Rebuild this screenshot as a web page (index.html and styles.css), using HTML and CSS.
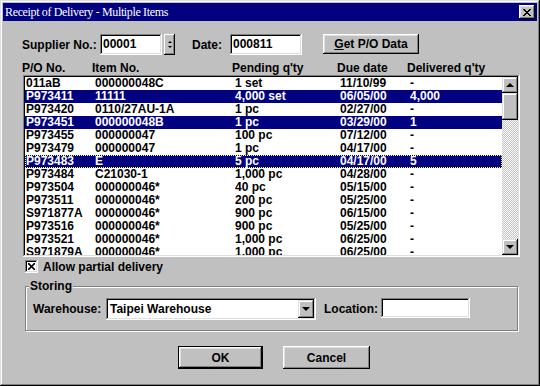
FILE: index.html
```html
<!DOCTYPE html>
<html lang="en">

<head>
  <meta charset="UTF-8" />
  <meta name="viewport" content="width=device-width, initial-scale=1.0" />
  <title>Receipt of Delivery - Multiple Items</title>
  <link rel="stylesheet" href="styles.css">
</head>

<body>
  <div class="window">
    <div class="titlebar">
      <span class="title">Receipt of Delivery - Multiple Items</span>
      <button class="close">
        <svg width="8" height="7" viewBox="0 0 8 7"><path d="M0 0 L7 7 M1 0 L8 7 M7 0 L0 7 M8 0 L1 7" stroke="#000" stroke-width="1" /></svg>
      </button>
    </div>

    <div class="content">
      <!-- supplier / date row -->
      <div class="top-row">
        <span class="lbl lbl-supplier">Supplier No.:</span>
        <div class="field field-supplier">00001</div>
        <div class="spin">
          <span class="spin-up"></span>
          <span class="spin-down"></span>
        </div>
        <span class="lbl lbl-date">Date:</span>
        <div class="field field-date">000811</div>
        <button class="btn btn-get"><u>G</u>et P/O Data</button>
      </div>

      <!-- list -->
      <div class="list-head">
        <span>P/O No.</span>
        <span>Item No.</span>
        <span>Pending q'ty</span>
        <span>Due date</span>
        <span>Delivered q'ty</span>
      </div>
      <div class="listbox">
        <div class="rows">
          <div class="row"><span>011aB</span><span>000000048C</span><span>1 set</span><span>11/10/99</span><span>-</span></div>
          <div class="row sel"><span>P973411</span><span>11111</span><span>4,000 set</span><span>06/05/00</span><span>4,000</span></div>
          <div class="row"><span>P973420</span><span>0110/27AU-1A</span><span>1 pc</span><span>02/27/00</span><span>-</span></div>
          <div class="row sel"><span>P973451</span><span>000000048B</span><span>1 pc</span><span>03/29/00</span><span>1</span></div>
          <div class="row"><span>P973455</span><span>000000047</span><span>100 pc</span><span>07/12/00</span><span>-</span></div>
          <div class="row"><span>P973479</span><span>000000047</span><span>1 pc</span><span>04/17/00</span><span>-</span></div>
          <div class="row sel focus"><span>P973483</span><span>E</span><span>5 pc</span><span>04/17/00</span><span>5</span></div>
          <div class="row"><span>P973484</span><span>C21030-1</span><span>1,000 pc</span><span>04/28/00</span><span>-</span></div>
          <div class="row"><span>P973504</span><span>000000046*</span><span>40 pc</span><span>05/15/00</span><span>-</span></div>
          <div class="row"><span>P973511</span><span>000000046*</span><span>200 pc</span><span>05/25/00</span><span>-</span></div>
          <div class="row"><span>S971877A</span><span>000000046*</span><span>900 pc</span><span>06/15/00</span><span>-</span></div>
          <div class="row"><span>P973516</span><span>000000046*</span><span>900 pc</span><span>05/25/00</span><span>-</span></div>
          <div class="row"><span>P973521</span><span>000000046*</span><span>1,000 pc</span><span>06/25/00</span><span>-</span></div>
          <div class="row"><span>S971879A</span><span>000000046*</span><span>1,000 pc</span><span>06/25/00</span><span>-</span></div>
        </div>
        <div class="scrollbar">
          <div class="sb-btn"><span class="arrow-up"></span></div>
          <div class="sb-thumb"></div>
          <div class="sb-track"></div>
          <div class="sb-btn"><span class="arrow-down"></span></div>
        </div>
      </div>

      <!-- partial delivery -->
      <div class="check-row">
        <div class="checkbox">
          <svg width="7" height="7" viewBox="0 0 7 7"><path d="M0 0 L7 7 M7 0 L0 7" stroke="#000" stroke-width="1.6" /></svg>
        </div>
        <span>Allow partial delivery</span>
      </div>

      <!-- storing group -->
      <div class="group">
        <span class="group-title">Storing</span>
        <span class="lbl lbl-warehouse">Warehouse:</span>
        <div class="combo">
          <span class="combo-text">Taipei Warehouse</span>
          <div class="combo-btn"><span class="arrow-down"></span></div>
        </div>
        <span class="lbl lbl-location">Location:</span>
        <div class="field field-location"></div>
      </div>

      <!-- buttons -->
      <div class="actions">
        <button class="btn btn-ok">OK</button>
        <button class="btn btn-cancel">Cancel</button>
      </div>
    </div>
  </div>
</body>

</html>
```

FILE: styles.css
```css
* {
  box-sizing: border-box;
}

body {
  margin: 0;
  background: #c0c0c0;
  font-family: "Liberation Sans", Arial, sans-serif;
  font-size: 12px;
  font-weight: bold;
  color: #000;
}

.window {
  width: 540px;
  height: 386px;
  padding: 3px;
  background: #c0c0c0;
  box-shadow: inset -1px -1px #000, inset 1px 1px #dfdfdf, inset -2px -2px #808080, inset 2px 2px #fff;
}

/* title bar */
.titlebar {
  height: 18px;
  background: #000080;
  display: flex;
  align-items: center;
  justify-content: space-between;
  padding: 0 2px 0 2px;
}

.titlebar .title {
  color: #fff;
  font-family: "Liberation Serif", "Times New Roman", serif;
  font-weight: normal;
  font-size: 12px;
  letter-spacing: -0.35px;
}

.close {
  width: 16px;
  height: 14px;
  padding: 0;
  border: none;
  background: #c0c0c0;
  display: flex;
  align-items: center;
  justify-content: center;
  box-shadow: inset -1px -1px #000, inset 1px 1px #fff, inset -2px -2px #808080, inset 2px 2px #dfdfdf;
}

.content {
  padding: 13px 20px 0 19px;
}

/* generic controls */
.lbl {
  white-space: nowrap;
}

.field {
  background: #fff;
  height: 21px;
  padding: 3px 3px 0 3px;
  line-height: 14px;
  box-shadow: inset -1px -1px #fff, inset 1px 1px #808080, inset -2px -2px #dfdfdf, inset 2px 2px #000;
}

.btn {
  font-family: inherit;
  font-size: 12px;
  font-weight: bold;
  background: #c0c0c0;
  border: none;
  padding: 0;
  color: #000;
  box-shadow: inset -1px -1px #000, inset 1px 1px #fff, inset -2px -2px #808080, inset 2px 2px #dfdfdf;
}

/* top row */
.top-row {
  display: flex;
  align-items: center;
  height: 21px;
}

.lbl-supplier {
  width: 78px;
}

.field-supplier {
  width: 62px;
}

.spin {
  width: 11px;
  height: 21px;
  margin-left: 2px;
  display: flex;
  flex-direction: column;
  align-items: center;
  justify-content: center;
  gap: 3px;
  background: #c0c0c0;
  box-shadow: inset -1px -1px #000, inset 1px 1px #fff, inset -2px -2px #808080;
}

.spin-up {
  border-left: 2px solid transparent;
  border-right: 2px solid transparent;
  border-bottom: 2px solid #000;
}

.spin-down {
  border-left: 2px solid transparent;
  border-right: 2px solid transparent;
  border-top: 2px solid #000;
}

.lbl-date {
  width: 38px;
  margin-left: 17px;
}

.field-date {
  width: 72px;
}

.btn-get {
  width: 96px;
  height: 20px;
  margin-left: 21px;
  align-self: flex-start;
}

/* list */
.list-head {
  margin-top: 7px;
  height: 13px;
  line-height: 13px;
  display: grid;
  grid-template-columns: 70px 140px 105px 70px 1fr;
  white-space: nowrap;
}

.listbox {
  margin-left: 1px;
  width: 497px;
  height: 182px;
  padding: 2px;
  background: #fff;
  display: flex;
  box-shadow: inset -1px -1px #fff, inset 1px 1px #808080, inset -2px -2px #dfdfdf, inset 2px 2px #000;
}

.rows {
  flex: 1;
  overflow: hidden;
}

.row {
  height: 13px;
  line-height: 13px;
  padding-left: 1px;
  display: grid;
  grid-template-columns: 69px 140px 105px 70px 1fr;
  white-space: nowrap;
}

.row.sel {
  background: #000080;
  color: #fff;
}

.row.focus {
  outline: 1px dotted #ffff80;
  outline-offset: -1px;
}

.scrollbar {
  width: 16px;
  display: flex;
  flex-direction: column;
}

.sb-btn {
  width: 16px;
  height: 16px;
  background: #c0c0c0;
  display: flex;
  align-items: center;
  justify-content: center;
  box-shadow: inset -1px -1px #000, inset 1px 1px #dfdfdf, inset -2px -2px #808080, inset 2px 2px #fff;
}

.sb-thumb {
  height: 27px;
  background: #c0c0c0;
  box-shadow: inset -1px -1px #000, inset 1px 1px #dfdfdf, inset -2px -2px #808080, inset 2px 2px #fff;
}

.sb-track {
  flex: 1;
  background: repeating-conic-gradient(#c0c0c0 0 25%, #fff 0 50%) 0 0 / 2px 2px;
}

.arrow-up {
  border-left: 4px solid transparent;
  border-right: 4px solid transparent;
  border-bottom: 4px solid #000;
}

.arrow-down {
  border-left: 4px solid transparent;
  border-right: 4px solid transparent;
  border-top: 4px solid #000;
}

/* checkbox */
.check-row {
  margin-top: 3px;
  height: 13px;
  display: flex;
  align-items: center;
  gap: 5px;
  margin-left: 3px;
}

.checkbox {
  width: 13px;
  height: 13px;
  background: #fff;
  display: flex;
  align-items: center;
  justify-content: center;
  box-shadow: inset -1px -1px #fff, inset 1px 1px #808080, inset -2px -2px #dfdfdf, inset 2px 2px #000;
}

/* storing group */
.group {
  position: relative;
  margin-top: 13px;
  margin-left: 3px;
  width: 493px;
  height: 45px;
  border: 1px solid #808080;
  box-shadow: 1px 1px 0 #fff, inset 1px 1px 0 #fff;
  padding: 11px 0 0 7px;
  display: flex;
  align-items: flex-start;
}

.group-title {
  position: absolute;
  left: 3px;
  top: -8px;
  padding: 0 1px;
  background: #c0c0c0;
  line-height: 14px;
}

.lbl-warehouse {
  width: 73px;
  line-height: 22px;
}

.combo {
  width: 210px;
  height: 22px;
  background: #fff;
  display: flex;
  align-items: center;
  justify-content: space-between;
  padding: 2px;
  box-shadow: inset -1px -1px #fff, inset 1px 1px #808080, inset -2px -2px #dfdfdf, inset 2px 2px #000;
}

.combo-text {
  padding-left: 2px;
}

.combo-btn {
  width: 16px;
  height: 18px;
  background: #c0c0c0;
  display: flex;
  align-items: center;
  justify-content: center;
  box-shadow: inset -1px -1px #000, inset 1px 1px #dfdfdf, inset -2px -2px #808080, inset 2px 2px #fff;
}

.lbl-location {
  width: 57px;
  margin-left: 8px;
  line-height: 22px;
}

.field-location {
  width: 89px;
  height: 20px;
}

/* buttons */
.actions {
  margin-top: 15px;
  margin-left: 156px;
  display: flex;
  gap: 20px;
}

.btn-ok {
  width: 85px;
  height: 23px;
  border: 1px solid #000;
}

.btn-cancel {
  width: 87px;
  height: 23px;
}
```
